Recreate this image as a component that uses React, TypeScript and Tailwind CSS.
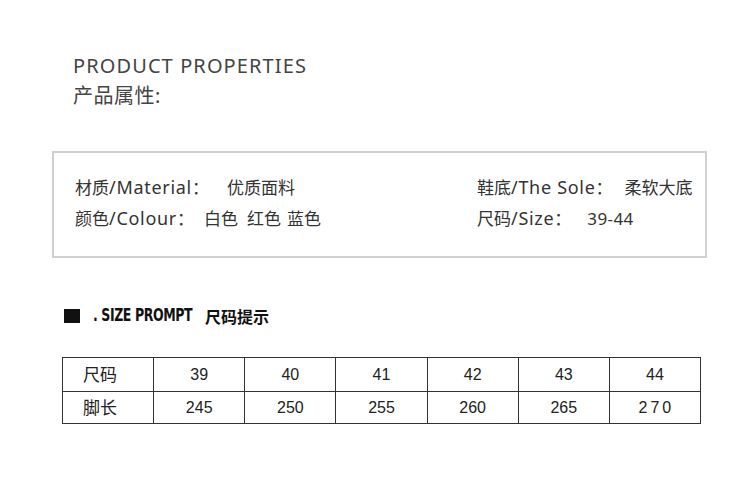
import React from 'react';

const sizes = ['39', '40', '41', '42', '43', '44'];
const lengths = ['245', '250', '255', '260', '265', '270'];

const cjk = { fontFamily: '"Noto Sans", "Noto Sans CJK SC", sans-serif' };

// latin part of a property label, a bit wider than the CJK text around it
const Latin = ({ children }: { children: React.ReactNode }) => (
    <span className="text-[18px] tracking-[0.7px]">{children}</span>
);

const App = () => {
    return (
        <div className="w-[750px] h-[491px] bg-white text-[#333] overflow-hidden" style={cjk}>
            {/* title */}
            <div className="pl-[73px] pt-[53px]">
                <h1 className="text-[20px] leading-[26px] tracking-[1.1px] text-[#444] font-normal">PRODUCT PROPERTIES</h1>
                <p className="text-[20px] leading-[28px] mt-[3px] text-[#444] tracking-[0.5px]">产品属性:</p>
            </div>

            {/* properties box */}
            <div className="ml-[52px] mt-[41px] w-[655px] h-[107px] border-2 border-[#d0d0d0] flex pl-[21px] pt-[19px] text-[17px] leading-[31px] text-[#333]">
                <div className="w-[402px]">
                    <p>材质<Latin>/Material</Latin>：<span className="ml-[18px]">优质面料</span></p>
                    <p>颜色<Latin>/Colour</Latin>：<span className="ml-[10px]">白色</span><span className="ml-[9px]">红色</span><span className="ml-[6px]">蓝色</span></p>
                </div>
                <div>
                    <p>鞋底<Latin>/The Sole</Latin>：<span className="ml-[12px]">柔软大底</span></p>
                    <p>尺码<Latin>/Size</Latin>：<span className="ml-[16px] tracking-[0.4px]">39-44</span></p>
                </div>
            </div>

            {/* size prompt header */}
            <div className="flex items-center pl-[64px] mt-[48px] h-[20px]">
                <div className="w-[16px] h-[14px] bg-[#111]" />
                <span
                    className="ml-[13px] text-[17px] font-bold text-[#111] tracking-[-0.5px]"
                    style={{ fontFamily: '"DejaVu Sans Condensed", "DejaVu Sans", sans-serif', transform: 'scaleX(0.82)', transformOrigin: 'left' }}
                >
                    . SIZE PROMPT
                </span>
                <span className="ml-[-9px] text-[16px] font-bold text-[#111]" style={{ fontFamily: '"Noto Sans CJK SC", sans-serif' }}>尺码提示</span>
            </div>

            {/* size table */}
            <div className="ml-[62px] mt-[31px] w-[639px]">
                <table className="w-full border-collapse table-fixed text-[16px] text-[#222]" style={{ fontFamily: '"Liberation Sans", "Noto Sans CJK SC", sans-serif' }}>
                    <tbody>
                        <tr className="h-[34px]">
                            <td className="border-[1.5px] border-[#333] pl-[20px] text-[17px]" style={cjk}>尺码</td>
                            {sizes.map((s) => (
                                <td key={s} className="border-[1.5px] border-[#333] text-center">{s}</td>
                            ))}
                        </tr>
                        <tr className="h-[32px]">
                            <td className="border-[1.5px] border-[#333] pl-[20px] text-[17px]" style={cjk}>脚长</td>
                            {lengths.map((l, i) => (
                                <td key={l} className={`border-[1.5px] border-[#333] text-center ${i === 5 ? 'tracking-[3px] pl-[3px]' : ''}`}>{l}</td>
                            ))}
                        </tr>
                    </tbody>
                </table>
            </div>
        </div>
    );
};

export default App;
